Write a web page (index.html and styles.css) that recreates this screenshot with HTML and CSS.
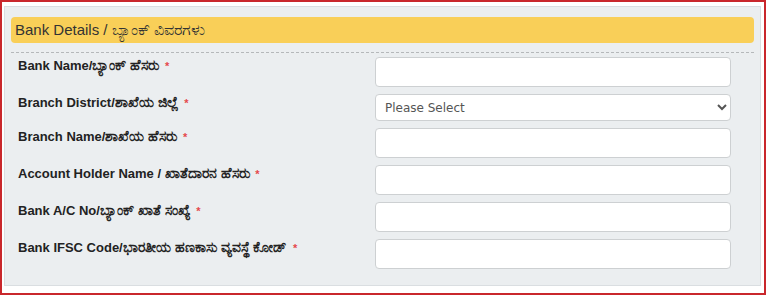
FILE: index.html
```html
<!DOCTYPE html>
<html lang="kn">
<head>
  <meta charset="UTF-8">
  <meta name="viewport" content="width=device-width, initial-scale=1.0">
  <title>Bank Details</title>
  <link rel="stylesheet" href="styles.css">
</head>
<body>
  <div class="frame">
    <div class="panel">
      <div class="section-head">Bank Details / <span class="kn">ಬ್ಯಾಂಕ್ ವಿವರಗಳು</span></div>

      <div class="form">
        <label class="field-label">Bank Name/<span class="kn">ಬ್ಯಾಂಕ್ ಹೆಸರು</span> <span class="req">*</span></label>
        <input class="field" type="text">

        <label class="field-label">Branch District/<span class="kn">ಶಾಖೆಯ ಜಿಲ್ಲೆ</span> <span class="req">*</span></label>
        <select class="field field-select">
          <option>Please Select</option>
        </select>

        <label class="field-label">Branch Name/<span class="kn">ಶಾಖೆಯ ಹೆಸರು</span> <span class="req">*</span></label>
        <input class="field" type="text">

        <label class="field-label">Account Holder Name / <span class="kn">ಖಾತೆದಾರನ ಹೆಸರು</span> <span class="req">*</span></label>
        <input class="field" type="text">

        <label class="field-label">Bank A/C No/<span class="kn">ಬ್ಯಾಂಕ್ ಖಾತೆ ಸಂಖ್ಯೆ</span> <span class="req">*</span></label>
        <input class="field" type="text">

        <label class="field-label">Bank IFSC Code/<span class="kn">ಭಾರತೀಯ ಹಣಕಾಸು ವ್ಯವಸ್ಥೆ ಕೋಡ್</span> <span class="req">*</span></label>
        <input class="field" type="text">
      </div>
    </div>
  </div>
</body>
</html>
```

FILE: styles.css
```css
* {
  margin: 0;
  padding: 0;
  box-sizing: border-box;
}

body {
  font-family: 'Liberation Sans', Arial, sans-serif;
  background: #ffffff;
  color: #222222;
}

.frame {
  height: 295px;
  border: 2px solid #c9272c;
  padding: 4px 3px 7px 2px;
  background: #ffffff;
}

.panel {
  background: #ebeef0;
  border: 1px solid #dadee1;
  padding: 10px 6px 16px 6px;
}

.section-head {
  height: 26px;
  background: #f9cf58;
  border-radius: 4px;
  padding: 0 4px;
  font-size: 15px;
  line-height: 26px;
  color: #333333;
}

.section-head .kn {
  font-size: 16px;
}

.form {
  margin-top: 9px;
  border-top: 1px dashed #b5b8ba;
  padding: 4px 0 0 7px;
  display: grid;
  grid-template-columns: 357px 356px;
  row-gap: 7px;
}

.field-label {
  font-size: 13px;
  font-weight: bold;
  line-height: 15px;
  padding-top: 1px;
  color: #222222;
}

.kn {
  font-size: 14px;
  line-height: 15px;
}

.req {
  color: #e5484d;
  font-size: 11px;
  margin-left: 2px;
}

.field {
  height: 30px;
  width: 356px;
  border: 1px solid #cdd0d2;
  border-radius: 4px;
  background: #ffffff;
  font-family: 'DejaVu Sans', Verdana, sans-serif;
  font-size: 12px;
  color: #555555;
}

.field-select {
  height: 27px;
  padding-left: 5px;
}
```
